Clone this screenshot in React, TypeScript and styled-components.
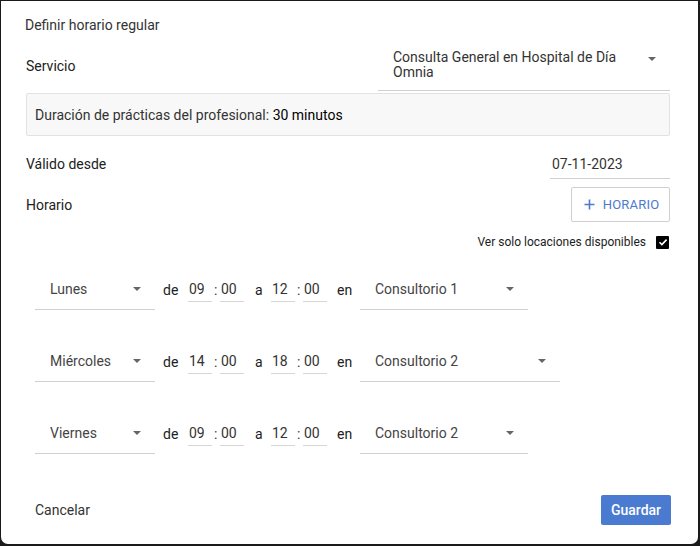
import React from "react";
import styled, { createGlobalStyle } from "styled-components";

const Global = createGlobalStyle`
  html, body { margin: 0; padding: 0; background: #1a1a1a; }
  body { font-family: Roboto, "Noto Sans", sans-serif; }
  * { box-sizing: border-box; }
`;

const Frame = styled.div`
  width: 700px;
  height: 546px;
  padding: 1px 2px 2px 1px;
  background: #1a1a1a;
`;

const Dialog = styled.div`
  height: 100%;
  background: #fff;
  border-radius: 0 0 7px 7px;
  padding: 14px 28px 19px 24px;
  display: flex;
  flex-direction: column;
  color: #212121;
  font-size: 14px;
`;

const Title = styled.div`
  line-height: 20px;
  color: #333;
  font-size: 14px;
`;

const FieldRow = styled.div<{ $mt: number; $top?: boolean }>`
  display: flex;
  align-items: ${(p) => (p.$top ? "flex-start" : "center")};
  justify-content: space-between;
  margin-top: ${(p) => p.$mt}px;
  padding-left: 1px;
`;

const Label = styled.div<{ $pt?: number }>`
  line-height: 20px;
  color: #212121;
  padding-top: ${(p) => p.$pt ?? 0}px;
`;

const Caret = styled.span`
  width: 0;
  height: 0;
  border-left: 4px solid transparent;
  border-right: 4px solid transparent;
  border-top: 4px solid #666;
  flex: none;
`;

const ServiceSelect = styled.div`
  width: 292px;
  height: 43px;
  border-bottom: 1px solid #d0d0d0;
  display: flex;
  align-items: flex-start;
  padding: 2px 14px 0 15px;
  color: #333;
  ${Caret} { margin-top: 7px; margin-left: 12px; }
`;

const ServiceText = styled.div`
  flex: 1;
  line-height: 15px;
`;

const InfoBox = styled.div`
  margin-top: 2px;
  margin-left: 1px;
  height: 43px;
  background: #f8f8f8;
  border: 1px solid #e2e2e2;
  border-radius: 2px;
  display: flex;
  align-items: center;
  padding-left: 8px;
  color: #333;
  b { font-weight: 400; color: #000; }
`;

const DateField = styled.div`
  width: 120px;
  height: 30px;
  border-bottom: 1px solid #d0d0d0;
  padding: 5px 0 0 2px;
  line-height: 20px;
  color: #333;
`;

const OutlineButton = styled.button`
  width: 99px;
  height: 35px;
  border: 1px solid #cfcfcf;
  border-radius: 2px;
  background: #fff;
  color: #4a7bd0;
  font-family: Roboto, sans-serif;
  font-size: 13px;
  letter-spacing: 0.2px;
  display: flex;
  align-items: center;
  justify-content: center;
  gap: 8px;
  padding: 0 0 0 2px;
`;

const CheckRow = styled.div`
  margin-top: 10px;
  height: 20px;
  display: flex;
  align-items: center;
  justify-content: flex-end;
  gap: 10px;
  font-size: 12px;
  color: #212121;
  padding-right: 1px;
`;

const CheckBox = styled.span`
  width: 13px;
  height: 13px;
  background: #000;
  border-radius: 1px;
  display: flex;
  align-items: center;
  justify-content: center;
`;

const Rows = styled.div`
  margin-top: 18px;
  display: flex;
  flex-direction: column;
  gap: 32px;
`;

const ScheduleRow = styled.div`
  display: flex;
  align-items: center;
  height: 40px;
  padding-left: 10px;
`;

const Select = styled.div<{ $w: number }>`
  width: ${(p) => p.$w}px;
  height: 40px;
  border-bottom: 1px solid #d0d0d0;
  display: flex;
  align-items: center;
  justify-content: space-between;
  padding: 0 14px 2px 15px;
  color: #444;
`;

const Word = styled.span<{ $w: number; $pl: number }>`
  width: ${(p) => p.$w}px;
  padding-left: ${(p) => p.$pl}px;
  color: #212121;
  flex: none;
`;

const TimeField = styled.span`
  width: 24px;
  height: 24px;
  border-bottom: 1px solid #d6d6d6;
  line-height: 22px;
  padding-left: 1px;
  color: #333;
  flex: none;
`;

const Colon = styled.span`
  width: 8px;
  padding-left: 2px;
  color: #333;
  flex: none;
`;

const Footer = styled.div`
  margin-top: auto;
  display: flex;
  align-items: center;
  justify-content: space-between;
  padding-left: 10px;
`;

const TextButton = styled.button`
  border: none;
  background: none;
  font-family: Roboto, sans-serif;
  font-size: 14px;
  color: #333;
  padding: 0;
`;

const PrimaryButton = styled.button`
  width: 70px;
  height: 30px;
  border: none;
  border-radius: 2px;
  background: #4a7bd0;
  color: #fff;
  font-family: Roboto, sans-serif;
  font-size: 14px;
  font-weight: 500;
  margin-right: -1px;
`;

type Row = { day: string; from: string; to: string; loc: string; locW: number };
const rows: Row[] = [
  { day: "Lunes", from: "09", to: "12", loc: "Consultorio 1", locW: 168 },
  { day: "Miércoles", from: "14", to: "18", loc: "Consultorio 2", locW: 200 },
  { day: "Viernes", from: "09", to: "12", loc: "Consultorio 2", locW: 168 },
];

export default function App() {
  return (
    <>
      <Global />
      <Frame>
        <Dialog>
          <Title>Definir horario regular</Title>
          <FieldRow $mt={13} $top>
            <Label $pt={8}>Servicio</Label>
            <ServiceSelect>
              <ServiceText>Consulta General en Hospital de Día Omnia</ServiceText>
              <Caret />
            </ServiceSelect>
          </FieldRow>
          <InfoBox>
            <span>
              Duración de prácticas del profesional: <b>30 minutos</b>
            </span>
          </InfoBox>
          <FieldRow $mt={13}>
            <Label>Válido desde</Label>
            <DateField>07-11-2023</DateField>
          </FieldRow>
          <FieldRow $mt={8}>
            <Label>Horario</Label>
            <OutlineButton>
              <svg width="11" height="11" viewBox="0 0 11 11">
                <path d="M5.5 0.5v10M0.5 5.5h10" stroke="#4a7bd0" strokeWidth="1.6" />
              </svg>
              HORARIO
            </OutlineButton>
          </FieldRow>
          <CheckRow>
            <span>Ver solo locaciones disponibles</span>
            <CheckBox>
              <svg width="10" height="10" viewBox="0 0 10 10">
                <path d="M1.5 5.2l2.4 2.4L8.6 2.6" stroke="#fff" strokeWidth="1.6" fill="none" />
              </svg>
            </CheckBox>
          </CheckRow>
          <Rows>
            {rows.map((r, i) => (
              <ScheduleRow key={i}>
                <Select $w={120}>
                  <span>{r.day}</span>
                  <Caret />
                </Select>
                <Word $w={33} $pl={8}>de</Word>
                <TimeField>{r.from}</TimeField>
                <Colon>:</Colon>
                <TimeField>00</TimeField>
                <Word $w={27} $pl={11}>a</Word>
                <TimeField>{r.to}</TimeField>
                <Colon>:</Colon>
                <TimeField>00</TimeField>
                <Word $w={33} $pl={10}>en</Word>
                <Select $w={r.locW}>
                  <span>{r.loc}</span>
                  <Caret />
                </Select>
              </ScheduleRow>
            ))}
          </Rows>
          <Footer>
            <TextButton>Cancelar</TextButton>
            <PrimaryButton>Guardar</PrimaryButton>
          </Footer>
        </Dialog>
      </Frame>
    </>
  );
}
